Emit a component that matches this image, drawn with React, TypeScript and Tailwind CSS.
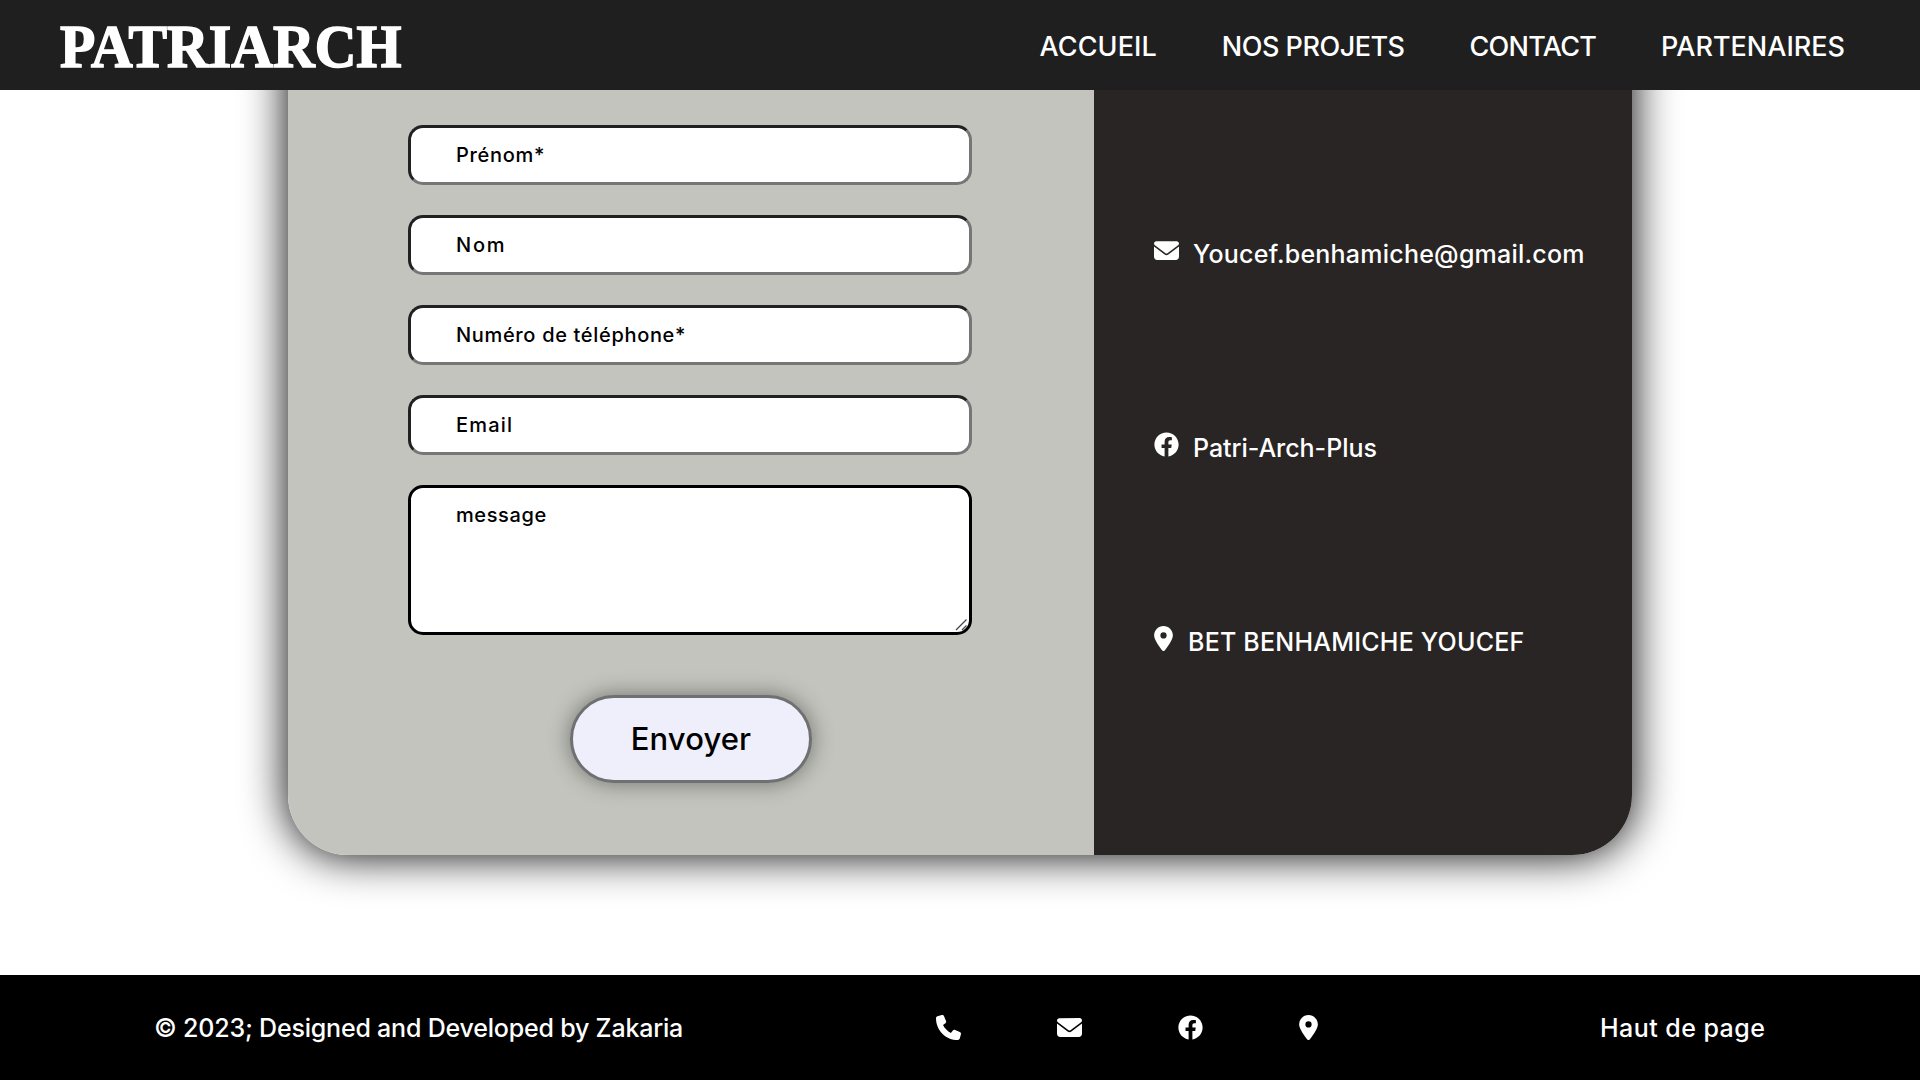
import React from "react";
import { FaFacebook } from "react-icons/fa";
import { FaEnvelope, FaLocationDot, FaPhone } from "react-icons/fa6";

const links = [
  { label: "ACCUEIL", tracking: "tracking-[0.1px]" },
  { label: "NOS PROJETS", tracking: "tracking-[-0.5px]" },
  { label: "CONTACT", tracking: "tracking-[-0.75px]" },
  { label: "PARTENAIRES", tracking: "tracking-[0px]" },
];

const fields = [
  { label: "Prénom*", tracking: "tracking-[0.7px]" },
  { label: "Nom", tracking: "tracking-[1.8px]" },
  { label: "Numéro de téléphone*", tracking: "tracking-[0.67px]" },
  { label: "Email", tracking: "tracking-[1.2px]" },
];

function Header() {
  return (
    <header className="relative z-10 flex h-[90px] shrink-0 items-center justify-between border-b border-[#231d23] bg-[#1f1f1f] pl-[60px] pr-[75px] text-white">
      <span className="inline-block origin-left scale-x-[0.932] pt-[3px] font-['Liberation_Serif',serif] text-[62px] font-bold leading-none [-webkit-text-stroke:1.6px_white]">
        PATRIARCH
      </span>
      <nav className="flex gap-[65px] pt-[4px] text-[27px] font-medium leading-none">
        {links.map((l) => (
          <a key={l.label} href="#" className={l.tracking}>
            {l.label}
          </a>
        ))}
      </nav>
    </header>
  );
}

function ContactForm() {
  return (
    <form className="flex w-[806px] flex-col items-center gap-[30px] bg-[#c4c4be] pt-[95px]">
      {fields.map((f) => (
        <input
          key={f.label}
          placeholder={f.label}
          className={`-ml-[2px] h-[60px] w-[564px] rounded-[15px] border-[3px] border-b-[#767676] border-l-[#212121] border-r-[#767676] border-t-[#212121] bg-white px-[45px] text-[20px] font-medium outline-none placeholder:text-black placeholder:opacity-100 ${f.tracking}`}
        />
      ))}
      <div className="relative -ml-[2px] h-[150px] w-[564px]">
        <textarea
          placeholder="message"
          className="block size-full resize-none rounded-[15px] border-[3px] border-black bg-white px-[45px] py-[15px] text-[20px] font-medium leading-[24px] tracking-[0.6px] outline-none placeholder:text-black placeholder:opacity-100"
        />
        <svg className="absolute bottom-[3px] right-[3px] size-[15px]" viewBox="0 0 15 15" stroke="#444" strokeWidth="1.3">
          <path d="M2 13 L12.5 2.5 M8 13 L12.5 8.5" />
        </svg>
      </div>
      <button
        type="button"
        className="mt-[30px] h-[88px] w-[242px] rounded-[45px] border-[3px] border-[#6f7072] bg-[#efeffb] text-[31px] font-medium tracking-[0.1px] text-black shadow-[0_0_22px_rgba(0,0,0,0.42)]"
      >
        Envoyer
      </button>
    </form>
  );
}

function ContactInfo() {
  return (
    <aside className="flex flex-1 flex-col gap-[170px] bg-[#292524] pl-[60px] pt-[208px] text-[25px] font-medium leading-[24px] text-white">
      <div className="flex h-6 gap-[14px]">
        <FaEnvelope className="size-[25px]" />
        <span className="pt-[4px] tracking-[0.23px]">Youcef.benhamiche@gmail.com</span>
      </div>
      <div className="flex h-6 gap-[14px]">
        <FaFacebook className="size-[25px]" />
        <span className="pt-[4px] tracking-[-0.04px]">Patri-Arch-Plus</span>
      </div>
      <div className="flex h-6 gap-[15px]">
        <FaLocationDot className="h-[25px] w-[19px]" />
        <span className="pt-[4px] tracking-[0.22px]">BET BENHAMICHE YOUCEF</span>
      </div>
    </aside>
  );
}

function Footer() {
  return (
    <footer className="flex h-[105px] shrink-0 items-center bg-black pl-[154px] text-[25px] font-medium leading-none text-white">
      <span className="w-[782px] pt-[2px] tracking-[-0.2px]">© 2023; Designed and Developed by Zakaria</span>
      <div className="flex w-[664px] gap-24">
        <FaPhone className="size-[25px]" />
        <FaEnvelope className="size-[25px]" />
        <FaFacebook className="size-[25px]" />
        <FaLocationDot className="h-[25px] w-[19px]" />
      </div>
      <a href="#" className="pt-[2px] tracking-[0.45px]">
        Haut de page
      </a>
    </footer>
  );
}

export default function App() {
  return (
    <div className="flex h-screen flex-col overflow-hidden bg-white font-['Inter',sans-serif]">
      <Header />
      <main className="flex flex-1 flex-col items-center">
        <section className="-mt-[60px] flex h-[825px] w-[1344px] overflow-hidden rounded-b-[60px] shadow-[0_0_45px_black]">
          <ContactForm />
          <ContactInfo />
        </section>
      </main>
      <Footer />
    </div>
  );
}
